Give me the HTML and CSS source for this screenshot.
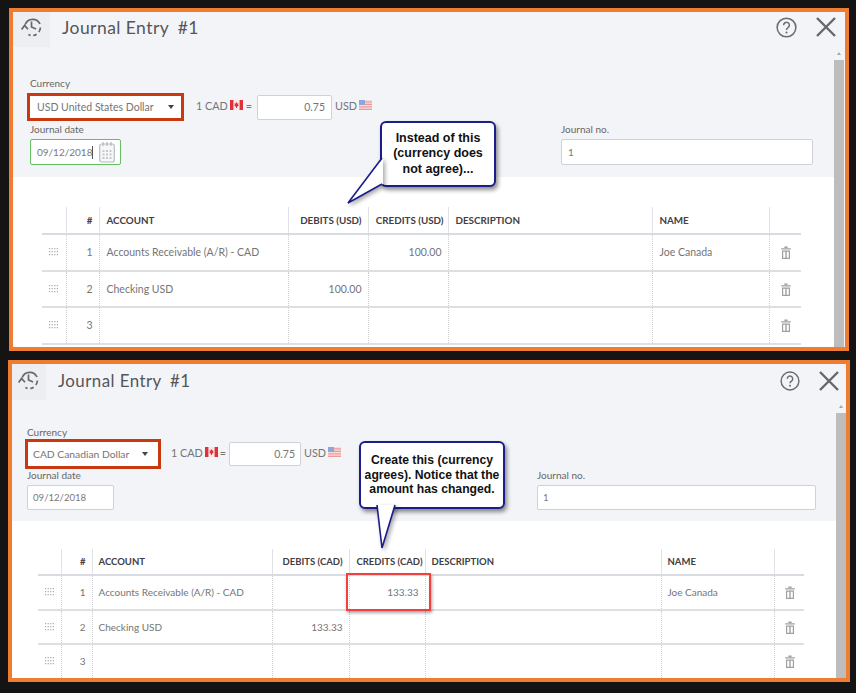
FILE: index.html
```html
<!DOCTYPE html>
<html lang="en">
<head>
<meta charset="utf-8">
<title>Journal Entry</title>
<link rel="stylesheet" href="styles.css">
</head>
<body>
<svg class="defs" width="0" height="0" aria-hidden="true">
  <symbol id="i-history" viewBox="0 0 24 24">
    <path d="M5.2 9.5A8 8 0 0 1 20 9" fill="none" stroke="#66686d" stroke-width="1.7"/>
    <path d="M20.4 12.5a8.4 8.4 0 0 1-1.6 4.6M16.6 19.2a8 8 0 0 1-3.4 1.3M10.6 20.4a7 7 0 0 1-2.2-.8" fill="none" stroke="#66686d" stroke-width="1.7"/>
    <path d="M1.6 14.6 4.6 10.4 8 14.2" fill="none" stroke="#66686d" stroke-width="1.7"/>
    <path d="M11.5 6.5V12l4.6 2" fill="none" stroke="#66686d" stroke-width="1.7"/>
  </symbol>
  <symbol id="i-grip" viewBox="0 0 9 8">
    <path d="M0 0h1.2v1.2H0zM2.6 0h1.2v1.2H2.6zM5.2 0h1.2v1.2H5.2zM7.8 0H9v1.2H7.8zM0 3h1.2v1.2H0zM2.6 3h1.2v1.2H2.6zM5.2 3h1.2v1.2H5.2zM7.8 3H9v1.2H7.8zM0 6h1.2v1.2H0zM2.6 6h1.2v1.2H2.6zM5.2 6h1.2v1.2H5.2zM7.8 6H9v1.2H7.8z" fill="#a9abae"/>
  </symbol>
  <symbol id="i-trash" viewBox="0 0 10 13">
    <path d="M3.4 .5h3.2v1.4H3.4zM.2 2.2h9.6v1.2H.2z" fill="#a0a0a0"/>
    <path d="M1 4.6h8V13H1zM2.2 5.8v6h2.1v-6zM5.7 5.8v6h2.1v-6z" fill="#a0a0a0" fill-rule="evenodd"/>
  </symbol>
  <symbol id="i-ca" viewBox="0 0 13 10">
    <rect width="13" height="10" fill="#f7e6e6"/>
    <rect width="3.4" height="10" fill="#e0303c"/>
    <rect x="9.6" width="3.4" height="10" fill="#e0303c"/>
    <path d="M6.5 2 7.3 3.6 8.6 3.4 8 5 8.8 5.6 7 6.8V8H6V6.8L4.2 5.6 5 5 4.4 3.4 5.7 3.6z" fill="#e0303c"/>
  </symbol>
  <symbol id="i-us" viewBox="0 0 13 10">
    <rect width="13" height="10" fill="#f7dcdc"/>
    <path d="M0 1.2h13v1.2H0zM0 3.8h13V5H0zM0 6.3h13v1.2H0zM0 8.8h13V10H0z" fill="#ef9a9a"/>
    <rect width="6" height="5" fill="#8fa6dc"/>
  </symbol>
  <symbol id="i-cal" viewBox="0 0 16 22">
    <rect x=".7" y="3" width="14.6" height="18" rx="2" fill="#f6f7f9" stroke="#b9bcc1" stroke-width="1.2"/>
    <path d="M4 1v4M8 1v4M12 1v4" stroke="#b9bcc1" stroke-width="1.3"/>
    <path d="M3.5 9h2v2h-2zM7 9h2v2H7zM10.5 9h2v2h-2zM3.5 12.500h2v2h-2zM7 12.500h2v2H7zM10.500 12.500h2v2h-2zM3.500 16h2v2h-2zM7 16h2v2H7zM10.500 16h2v2h-2z" fill="#c6c8cc"/>
  </symbol>
  <symbol id="i-help" viewBox="0 0 22 22">
    <circle cx="11" cy="11" r="9.8" fill="none" stroke="#6b6c70" stroke-width="1.6"/>
    <path d="M8 8.600a3 3 0 1 1 4.600 2.500c-1 .7-1.600 1.200-1.600 2.400" fill="none" stroke="#6b6c70" stroke-width="1.600"/>
    <circle cx="11" cy="16.200" r="1.100" fill="#6b6c70"/>
  </symbol>
  <symbol id="i-close" viewBox="0 0 20 20">
    <path d="M1 1 19 19M19 1 1 19" fill="none" stroke="#66676b" stroke-width="2.400"/>
  </symbol>
</svg>

<main class="stage">

  <section class="panel panel-a">
    <header class="head">
      <button class="history" type="button"><svg class="ico-history"><use href="#i-history"/></svg></button>
      <h1 class="title">Journal Entry <span class="num">#1</span></h1>
      <svg class="ico-help"><use href="#i-help"/></svg>
      <svg class="ico-close"><use href="#i-close"/></svg>
    </header>
    <div class="content">
      <div class="main">
        <div class="form">
          <label class="label">Currency</label>
          <div class="currency-row">
            <div class="select"><span>USD United States Dollar</span><i class="caret"></i></div>
            <div class="rate">
              <span class="rate-text">1 CAD</span><svg class="flag"><use href="#i-ca"/></svg><span class="rate-text eq">=</span>
              <div class="rate-input">0.75</div>
              <span class="rate-text">USD</span><svg class="flag"><use href="#i-us"/></svg>
            </div>
          </div>
          <div class="date-row">
            <div class="field">
              <label class="label">Journal date</label>
              <div class="input date focused"><span>09/12/2018</span><i class="cursor"></i><svg class="ico-cal"><use href="#i-cal"/></svg></div>
            </div>
            <div class="field field-no">
              <label class="label">Journal no.</label>
              <div class="input no">1</div>
            </div>
          </div>
        </div>
        <div class="sheet">
          <table class="grid">
            <colgroup><col class="c1"><col class="c2"><col class="c3"><col class="c4"><col class="c5"><col class="c6"><col class="c7"><col class="c8"></colgroup>
            <thead><tr><th></th><th class="r">#</th><th>ACCOUNT</th><th class="r">DEBITS (USD)</th><th class="r">CREDITS (USD)</th><th>DESCRIPTION</th><th>NAME</th><th></th></tr></thead>
            <tbody>
              <tr><td class="ctr"><svg class="ico-grip"><use href="#i-grip"/></svg></td><td class="r">1</td><td>Accounts Receivable (A/R) - CAD</td><td></td><td class="r">100.00</td><td></td><td>Joe Canada</td><td class="ctr"><svg class="ico-trash"><use href="#i-trash"/></svg></td></tr>
              <tr><td class="ctr"><svg class="ico-grip"><use href="#i-grip"/></svg></td><td class="r">2</td><td>Checking USD</td><td class="r">100.00</td><td></td><td></td><td></td><td class="ctr"><svg class="ico-trash"><use href="#i-trash"/></svg></td></tr>
              <tr><td class="ctr"><svg class="ico-grip"><use href="#i-grip"/></svg></td><td class="r">3</td><td></td><td></td><td></td><td></td><td></td><td class="ctr"><svg class="ico-trash"><use href="#i-trash"/></svg></td></tr>
            </tbody>
          </table>
        </div>
      </div>
      <div class="scrollbar"><i class="arrow"></i><div class="thumb"></div></div>
    </div>
    <div class="callout callout-a">
      <p>Instead of this<br>(currency does<br>not agree)...</p>
      <svg class="tail tail-a" viewBox="0 0 46 60"><polygon points="39,8 4,53 39,34" fill="#fff"/><polyline points="38,8 4,53 38,34" fill="none" stroke="#1c1c8a" stroke-width="1.600"/></svg>
    </div>
  </section>

  <section class="panel panel-b">
    <header class="head">
      <button class="history" type="button"><svg class="ico-history"><use href="#i-history"/></svg></button>
      <h1 class="title">Journal Entry <span class="num">#1</span></h1>
      <svg class="ico-help"><use href="#i-help"/></svg>
      <svg class="ico-close"><use href="#i-close"/></svg>
    </header>
    <div class="content">
      <div class="main">
        <div class="form">
          <label class="label">Currency</label>
          <div class="currency-row">
            <div class="select"><span>CAD Canadian Dollar</span><i class="caret"></i></div>
            <div class="rate">
              <span class="rate-text">1 CAD</span><svg class="flag"><use href="#i-ca"/></svg><span class="rate-text eq">=</span>
              <div class="rate-input">0.75</div>
              <span class="rate-text">USD</span><svg class="flag"><use href="#i-us"/></svg>
            </div>
          </div>
          <div class="date-row">
            <div class="field">
              <label class="label">Journal date</label>
              <div class="input date"><span>09/12/2018</span></div>
            </div>
            <div class="field field-no">
              <label class="label">Journal no.</label>
              <div class="input no">1</div>
            </div>
          </div>
        </div>
        <div class="sheet">
          <table class="grid">
            <colgroup><col class="c1"><col class="c2"><col class="c3"><col class="c4"><col class="c5"><col class="c6"><col class="c7"><col class="c8"></colgroup>
            <thead><tr><th></th><th class="r">#</th><th>ACCOUNT</th><th class="r">DEBITS (CAD)</th><th class="r">CREDITS (CAD)</th><th>DESCRIPTION</th><th>NAME</th><th></th></tr></thead>
            <tbody>
              <tr><td class="ctr"><svg class="ico-grip"><use href="#i-grip"/></svg></td><td class="r">1</td><td>Accounts Receivable (A/R) - CAD</td><td></td><td class="r">133.33</td><td></td><td>Joe Canada</td><td class="ctr"><svg class="ico-trash"><use href="#i-trash"/></svg></td></tr>
              <tr><td class="ctr"><svg class="ico-grip"><use href="#i-grip"/></svg></td><td class="r">2</td><td>Checking USD</td><td class="r">133.33</td><td></td><td></td><td></td><td class="ctr"><svg class="ico-trash"><use href="#i-trash"/></svg></td></tr>
              <tr><td class="ctr"><svg class="ico-grip"><use href="#i-grip"/></svg></td><td class="r">3</td><td></td><td></td><td></td><td></td><td></td><td class="ctr"><svg class="ico-trash"><use href="#i-trash"/></svg></td></tr>
            </tbody>
          </table>
        </div>
      </div>
      <div class="scrollbar"><i class="arrow"></i><div class="thumb"></div></div>
    </div>
    <div class="callout callout-b">
      <p>Create this (currency<br>agrees). Notice that the<br>amount has changed.</p>
      <svg class="tail tail-b" viewBox="0 0 28 47"><polygon points="5,0 10,43 23,0" fill="#fff"/><polyline points="5,0 10,43 23,0" fill="none" stroke="#1c1c8a" stroke-width="1.600"/></svg>
    </div>
    <div class="highlight"></div>
  </section>

</main>
</body>
</html>
```

FILE: styles.css
```css
* { box-sizing: border-box; }
html, body { margin: 0; height: 100%; }
body {
  background: #141414;
  color: #757575;
  font-family: Lato, "Liberation Sans", sans-serif;
  overflow: hidden;
}
.defs { position: absolute; }
.stage {
  display: flex;
  flex-direction: column;
  gap: 9px;
  padding-top: 8px;
}
.panel {
  position: relative;
  border: 4px solid #ee7d31;
  background: #f3f4f8;
  display: flex;
  flex-direction: column;
  overflow: hidden;
}
.panel-a { width: 840px; height: 343px; margin-left: 9px; }
.panel-b { width: 842px; height: 322px; margin-left: 8px; }

/* header */
.head { display: flex; align-items: center; flex: none; }
.panel-a .head { height: 35px; }
.panel-b .head { height: 36px; }
.history {
  border: 0;
  padding: 0 0 5px;
  background: #eceef1;
  display: flex;
  align-items: center;
  justify-content: center;
  align-self: stretch;
}
.panel-a .history { width: 37px; }
.panel-b .history { width: 34px; padding-bottom: 4px; }
.ico-history { width: 24px; height: 24px; }
.title {
  margin: 0 0 5px;
  flex: 1;
  font-weight: 400;
  letter-spacing: .45px;
  color: #55565a;
}
.panel-a .title { margin-left: 12px; font-size: 17.500px; }
.panel-b .title { margin-left: 12px; font-size: 16.900px; margin-bottom: 3px; }
.num { margin-left: 4px; }
.ico-help { width: 21px; height: 21px; margin-bottom: 5px; }
.ico-close { width: 20px; height: 20px; margin-bottom: 5px; }
.panel-a .ico-close { margin: 0 9px 5px 19px; }
.panel-b .ico-close { margin: 0 7px 3px 19px; }
.panel-b .ico-help { width: 20px; height: 20px; margin-bottom: 3px; }

/* body */
.content { flex: 1; display: flex; min-height: 0; }
.main { flex: 1; min-width: 0; display: flex; flex-direction: column; }
.scrollbar { flex: none; display: flex; flex-direction: column; align-items: stretch; }
.panel-a .scrollbar { width: 11px; padding-right: 1px; }
.panel-b .scrollbar { width: 10px; }
.arrow {
  display: block;
  height: 13px;
  position: relative;
  background: #f3f4f8;
}
.arrow::before {
  content: "";
  position: absolute;
  left: 3px;
  top: 5px;
  border: 2.500px solid transparent;
  border-top: 0;
  border-bottom: 3px solid #a6a6a6;
}
.thumb { flex: 1; background: #bdbdbd; }

/* form */
.form { flex: none; }
.panel-a .form { padding: 30px 21px 12px 17px; }
.panel-b .form { padding: 26px 20px 11px 15px; }
.label { display: block; font-size: 10px; line-height: 12px; color: #666666; }
.currency-row { display: flex; align-items: center; }
.panel-a .currency-row { margin: 4px 0 2px -3px; }
.panel-b .currency-row { margin: 1px 0 0 -2px; }
.select {
  display: flex;
  align-items: center;
  justify-content: space-between;
  background: #fff;
  border: 3px solid #c8390f;
  font-size: 10.500px;
}
.panel-a .select { width: 157px; height: 28px; padding: 0 7px 0 7px; }
.panel-b .select { width: 136px; height: 30px; padding: 0 10px 0 5px; font-size: 10.300px; }
.caret { border: 3.500px solid transparent; border-bottom: 0; border-top: 4px solid #444; }
.rate { display: flex; align-items: center; font-size: 10.800px; }
.panel-a .rate { margin-left: 12px; }
.panel-b .rate { margin-left: 10px; }
.rate-text { margin-bottom: 4px; }
.flag { width: 13px; height: 10px; margin: 0 0 4px 2px; }
.eq { margin-left: 3px; margin-right: 3px; }
.panel-b .eq { margin-left: 2px; margin-right: 2px; }
.rate-input {
  background: #fff;
  border: 1px solid #cfd1d6;
  border-radius: 2px;
  text-align: right;
  font-size: 10.500px;
  margin-right: 3px;
}
.panel-a .rate-input { width: 75px; height: 25px; line-height: 23px; padding-right: 6px; margin-left: 2px; }
.panel-b .rate-input { width: 72px; height: 24px; line-height: 22px; padding-right: 5px; margin-left: 1px; }

.date-row { display: flex; justify-content: space-between; }
.field .label { margin-bottom: 4px; }
.input {
  background: #fff;
  border: 1px solid #cfd1d6;
  border-radius: 2px;
  display: flex;
  align-items: center;
  padding-left: 6px;
  color: #7a7a7a;
}
.panel-a .input { height: 26px; font-size: 10px; }
.panel-b .input { height: 25px; font-size: 9.600px; padding-left: 5px; }
.panel-a .date { width: 91px; }
.panel-b .date { width: 87px; }
.panel-a .no { width: 252px; }
.panel-b .no { width: 279px; }
.focused { border-color: #63c05e; }
.cursor { width: 1px; height: 13px; background: #555; }
.ico-cal { width: 16px; height: 22px; margin-left: 6px; }

/* table */
.sheet { flex: 1; min-height: 0; background: #fff; overflow: hidden; }
.panel-a .sheet { padding: 30px 0 0 29px; }
.panel-b .sheet { padding: 28px 0 0 26px; }
.grid { border-collapse: collapse; table-layout: fixed; }
.panel-a .grid { width: 759px; font-size: 10.500px; }
.panel-b .grid { width: 766px; font-size: 10px; }
.panel-a .c1 { width: 24px; } .panel-a .c2 { width: 33px; } .panel-a .c3 { width: 189px; }
.panel-a .c4 { width: 80px; } .panel-a .c5 { width: 80px; } .panel-a .c6 { width: 204px; }
.panel-a .c7 { width: 117px; } .panel-a .c8 { width: 32px; }
.panel-b .c1 { width: 23px; } .panel-b .c2 { width: 31px; } .panel-b .c3 { width: 180px; }
.panel-b .c4 { width: 77px; } .panel-b .c5 { width: 76px; } .panel-b .c6 { width: 236px; }
.panel-b .c7 { width: 113px; } .panel-b .c8 { width: 30px; }
.grid th, .grid td { white-space: nowrap; overflow: visible; text-align: left; }
.panel-a .grid th, .panel-a .grid td { padding: 0 6px 0 7px; }
.panel-b .grid th, .panel-b .grid td { padding: 0 6px; }
.grid th {
  font-weight: 700;
  color: #3f4044;
  border-left: 1px solid #dfe2e9;
  border-bottom: 2px solid #d9dbe2;
}
.panel-a th { height: 27px; font-size: 9.800px; }
.panel-b th { height: 26px; font-size: 9.500px; }
.grid td {
  border-left: 1px dotted #cfd0d3;
  border-bottom: 2px solid #dedfe1;
}
.panel-a td { height: 36.500px; }
.panel-b td { height: 34.500px; }
.grid th:first-child, .grid td:first-child { border-left: 0; }
.grid .r { text-align: right; }
.panel-a .grid th.r:nth-child(5) { padding-right: 4px; padding-left: 0; }
.panel-a .grid th.r:nth-child(4), .panel-b .grid th.r:nth-child(4) { padding-left: 0; }
.panel-b .grid th.r:nth-child(5) { padding-left: 0; padding-right: 2px; }
.panel-a .grid .ctr, .panel-b .grid .ctr { text-align: center; padding: 0; }
.panel-a .grid .ctr:last-child, .panel-b .grid .ctr:last-child { padding-left: 2px; }
.ico-grip { width: 9px; height: 8px; }
.ico-trash { width: 10px; height: 13px; vertical-align: middle; }

/* annotations */
.callout {
  position: absolute;
  background: #fff;
  border: 2px solid #1c1c8a;
  border-radius: 6px;
  box-shadow: 2px 3px 4px rgba(0, 0, 0, .45);
  color: #111;
  font-family: "Liberation Sans", sans-serif;
  font-weight: 700;
  text-align: center;
  display: flex;
  align-items: center;
  justify-content: center;
}
.callout p { margin: 0; white-space: nowrap; }
.callout-a { left: 367px; top: 109px; width: 116px; height: 66px; font-size: 12.500px; line-height: 15.500px; }
.callout-b { left: 347px; top: 77px; width: 146px; height: 68px; font-size: 12.200px; line-height: 14.500px; }
.tail { position: absolute; overflow: visible; filter: drop-shadow(2px 2px 2px rgba(0, 0, 0, .35)); }
.tail-a { left: -38px; top: 27px; width: 46px; height: 60px; }
.tail-b { left: 11px; top: 62px; width: 28px; height: 47px; }
.highlight {
  position: absolute;
  left: 334px;
  top: 209px;
  width: 85px;
  height: 38px;
  border: 2px solid #f04040;
  box-shadow: 1px 2px 3px rgba(0, 0, 0, .35);
}
```
